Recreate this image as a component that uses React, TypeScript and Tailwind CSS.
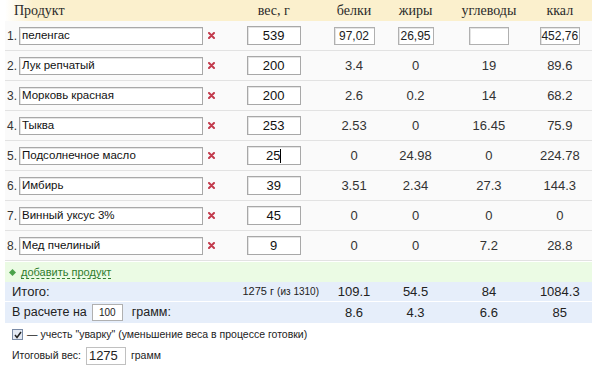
const rows = [
  { name: 'Лук репчатый', w: '200', p: '3.4', f: '0', c: '19', k: '89.6' },
  { name: 'Морковь красная', w: '200', p: '2.6', f: '0.2', c: '14', k: '68.2' },
  { name: 'Тыква', w: '253', p: '2.53', f: '0', c: '16.45', k: '75.9' },
  { name: 'Подсолнечное масло', w: '25', p: '0', f: '24.98', c: '0', k: '224.78', caret: true },
  { name: 'Имбирь', w: '39', p: '3.51', f: '2.34', c: '27.3', k: '144.3' },
  { name: 'Винный уксус 3%', w: '45', p: '0', f: '0', c: '0', k: '0' },
  { name: 'Мед пчелиный', w: '9', p: '0', f: '0', c: '7.2', k: '28.8' },
]

const sans = { fontFamily: '"Liberation Sans", Arial, sans-serif' }

function RemoveIcon() {
  return (
    <svg width="7" height="7" viewBox="0 0 7 7" className="shrink-0">
      <path d="M1 1 L6 6 M6 1 L1 6" stroke="#c23a4c" strokeWidth="2" strokeLinecap="round" />
    </svg>
  )
}

function NameCell({ n, name }: { n: number; name: string }) {
  return (
    <div className="w-[200px] flex items-center">
      <span className="w-[14px] pl-[2px] text-[12px] text-[#333]">{n}.</span>
      <div className="w-[184px] h-[18px] border border-[#a8a8a8] bg-white flex items-center pl-[2px] text-[11.5px] text-[#111] shadow-[inset_1px_1px_0_#e4e4e4]">
        {name}
      </div>
    </div>
  )
}

function WeightCell({ w, caret }: { w: string; caret?: boolean }) {
  return (
    <>
      <div className="w-[17px] flex justify-center">
        <RemoveIcon />
      </div>
      <div className="w-[108px] flex justify-center">
        <div className="w-[54px] h-[19px] border border-[#a8a8a8] bg-white flex items-center justify-center text-[13px] text-[#111] shadow-[inset_1px_1px_0_#e4e4e4]">
          {w}
          {caret && <span className="w-px h-[14px] bg-black" />}
        </div>
      </div>
    </>
  )
}

function SmallInput({ v, w }: { v: string; w: string }) {
  return (
    <div className={`${w} h-[18px] border border-[#b0b0b0] bg-white flex items-center justify-center text-[12px] text-[#222] shadow-[inset_1px_1px_0_#e4e4e4]`}>
      {v}
    </div>
  )
}

const colP = 'w-[54px] flex justify-center'
const colF = 'w-[70px] flex justify-center'
const colC = 'w-[78px] flex justify-center'
const colK = 'w-[65px] flex justify-center'

export default function App() {
  return (
    <div className="w-[604px] h-[368px] bg-white text-[#222] overflow-hidden" style={sans}>
      <div className="ml-[5px] w-[587px]">
        {/* header */}
        <div className="h-[21px] flex items-center text-[14px] text-[#2a2a2a] font-['Liberation_Serif','DejaVu_Serif',serif] bg-[linear-gradient(to_right,#fff,#fbf0cd_28px)]">
          <div className="w-[217px] pl-[9px]">Продукт</div>
          <div className="w-[108px] text-center">вес, г</div>
          <div className="w-[54px] text-center">белки</div>
          <div className="w-[70px] text-center">жиры</div>
          <div className="w-[78px] text-center">углеводы</div>
          <div className="w-[65px] text-center">ккал</div>
        </div>

        {/* first row with editable nutrients */}
        <div className="h-[30px] flex items-center border-b border-[#e2e2e2] bg-[#fafafa]">
          <NameCell n={1} name="пеленгас" />
          <WeightCell w="539" />
          <div className={colP}><SmallInput v="97,02" w="w-[41px]" /></div>
          <div className={colF}><SmallInput v="26,95" w="w-[36px]" /></div>
          <div className={colC}><SmallInput v="" w="w-[40px]" /></div>
          <div className={colK}><SmallInput v="452,76" w="w-[40px]" /></div>
        </div>

        {rows.map((r, i) => (
          <div key={i} className="h-[30px] flex items-center border-b border-[#e2e2e2] bg-[#fafafa] text-[13px] text-[#333]">
            <NameCell n={i + 2} name={r.name} />
            <WeightCell w={r.w} caret={r.caret} />
            <div className={colP}>{r.p}</div>
            <div className={colF}>{r.f}</div>
            <div className={colC}>{r.c}</div>
            <div className={colK}>{r.k}</div>
          </div>
        ))}

        {/* add product */}
        <div className="h-[21px] flex items-center gap-[5px] pl-[4px] bg-[#ebfbe4] border-t border-white">
          <svg width="7" height="7" viewBox="0 0 7 7">
            <path d="M3.5 0 L7 3.5 L3.5 7 L0 3.5 Z" fill="#4aa24a" />
          </svg>
          <span className="text-[11px] text-[#2f7d2f] border-b border-dashed border-[#2f7d2f] leading-[12px]">добавить продукт</span>
        </div>

        {/* totals */}
        <div className="h-[20px] flex items-center bg-[#e6eefa] border-b border-white text-[13px] text-[#222]">
          <div className="w-[217px] pl-[7px]">Итого:</div>
          <div className="w-[108px] text-center text-[11px] pl-[14px]">
            1275 г <span className="text-[10px]">(из 1310)</span>
          </div>
          <div className={colP}>109.1</div>
          <div className={colF}>54.5</div>
          <div className={colC}>84</div>
          <div className={colK}>1084.3</div>
        </div>
        <div className="h-[21px] flex items-center bg-[#e6eefa] text-[13px] text-[#222]">
          <div className="w-[325px] pl-[7px] flex items-center text-[12.5px]">
            В расчете на
            <div className="ml-[5px] w-[31px] h-[17px] border border-[#b0b0b0] bg-white flex items-center justify-center text-[10px]">100</div>
            <span className="ml-[9px]">грамм:</span>
          </div>
          <div className={colP}>8.6</div>
          <div className={colF}>4.3</div>
          <div className={colC}>6.6</div>
          <div className={colK}>85</div>
        </div>

        {/* options */}
        <div className="mt-[4px] flex items-center pl-[7px] text-[10.5px] text-[#222]">
          <div className="w-[11px] h-[11px] border border-[#7a8ba6] bg-[#e3e9f3] flex items-center justify-center">
            <svg width="8" height="8" viewBox="0 0 8 8">
              <path d="M1 4 L3 6.5 L7 1" fill="none" stroke="#222" strokeWidth="1.5" />
            </svg>
          </div>
          <span className="ml-[4px]">— учесть "уварку" (уменьшение веса в процессе готовки)</span>
        </div>
        <div className="mt-[4px] flex items-center pl-[7px] text-[10.5px] text-[#222]">
          Итоговый вес:
          <div className="ml-[5px] w-[40px] h-[18px] border border-[#c0c0c0] bg-white flex items-center pl-[2px] text-[13px]">1275</div>
          <span className="ml-[5px]">грамм</span>
        </div>
      </div>
    </div>
  )
}
